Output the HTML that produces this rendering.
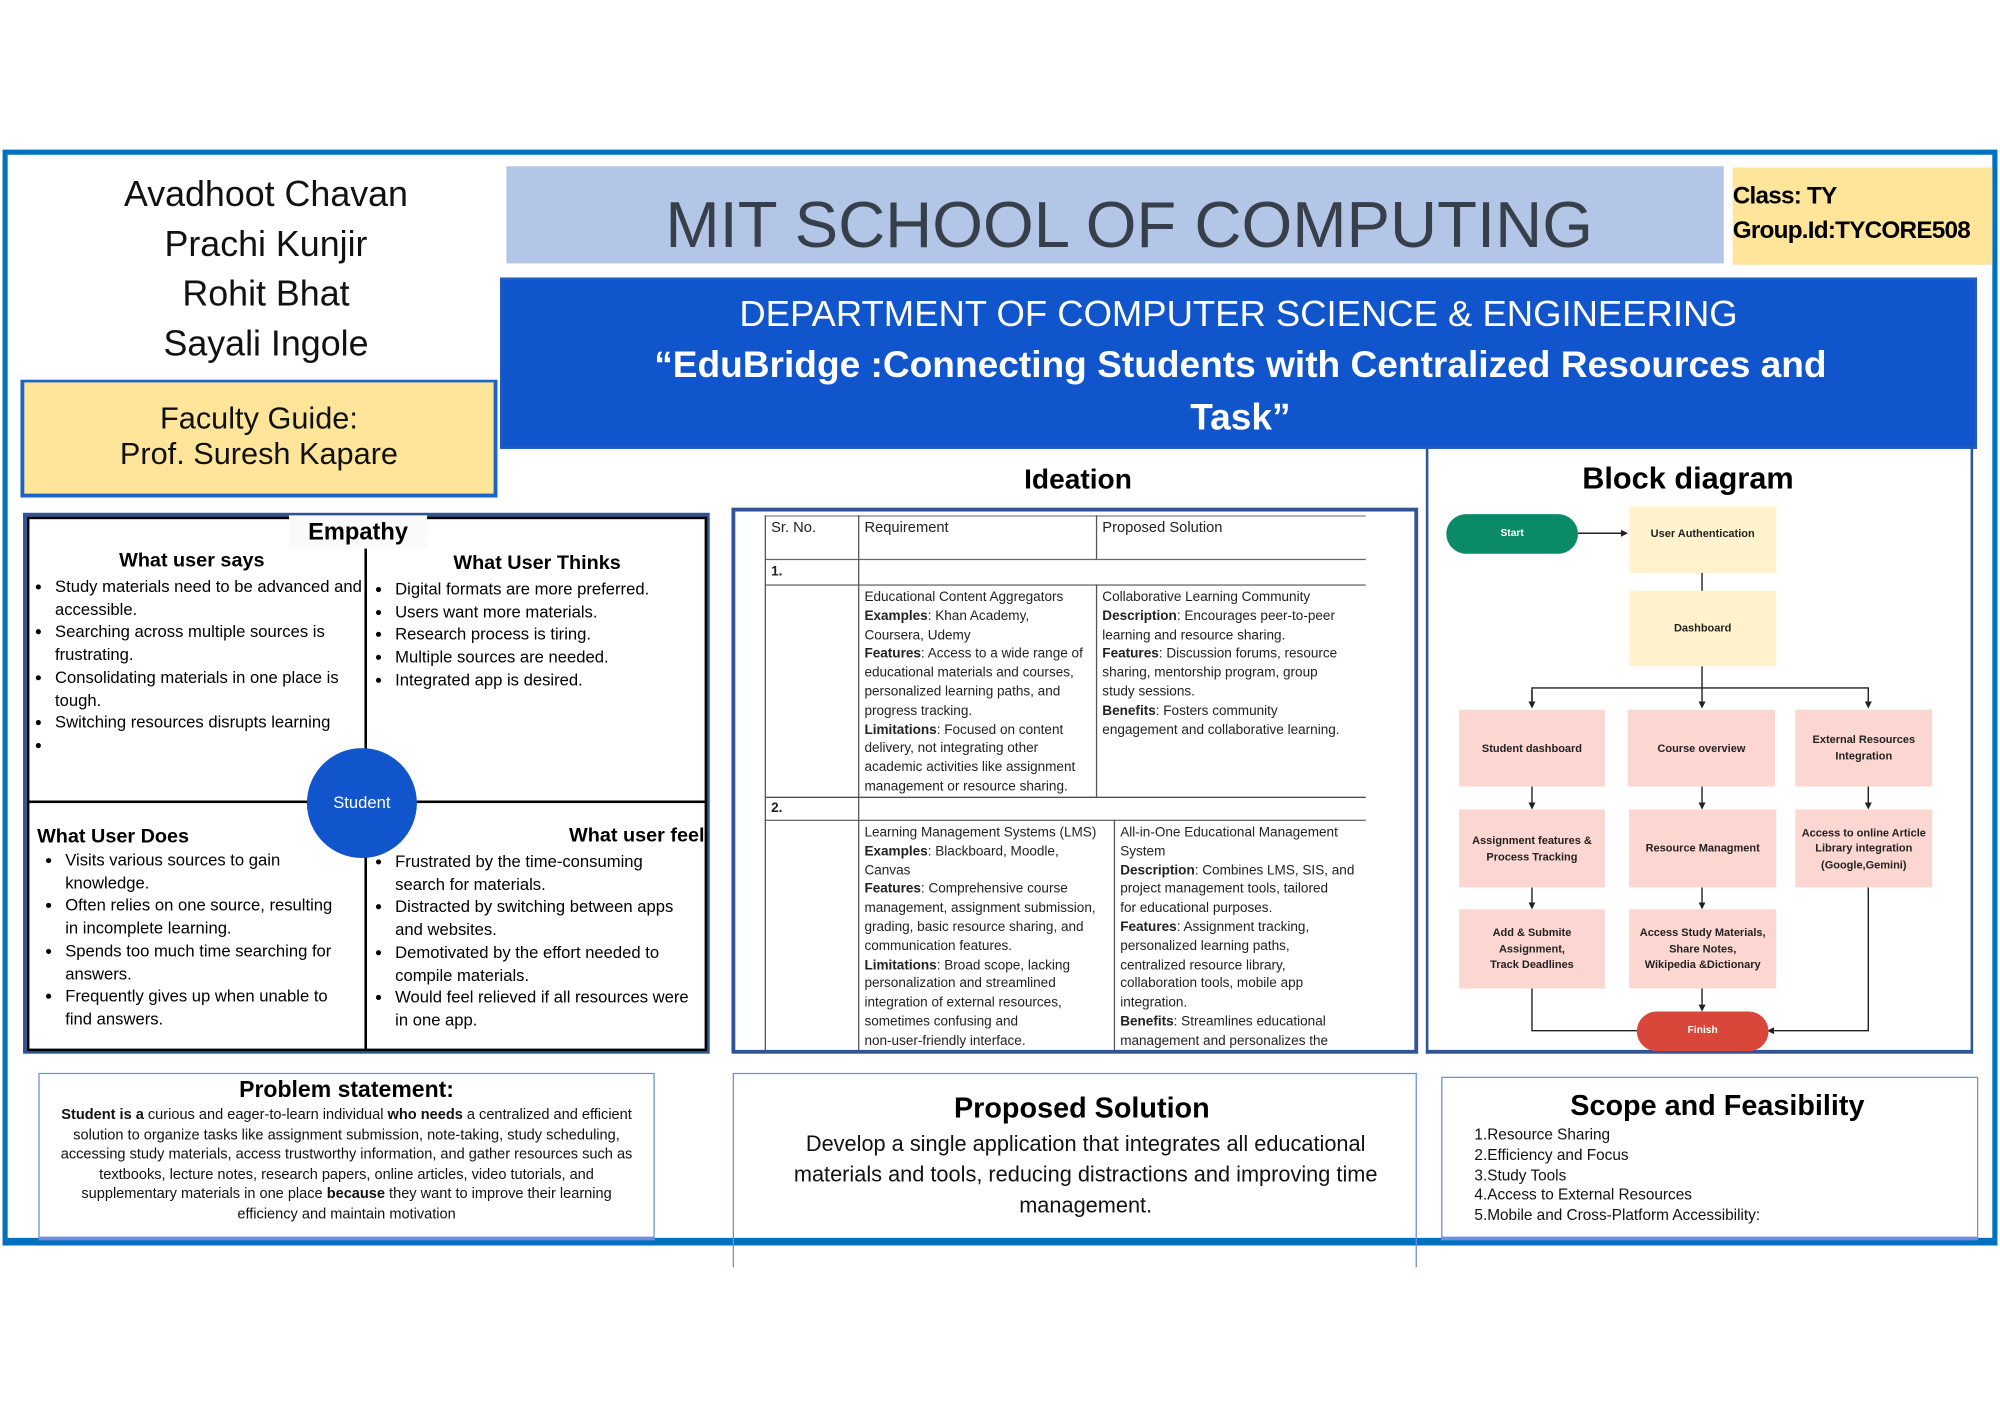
<!DOCTYPE html>
<html><head><meta charset="utf-8">
<style>
html,body{margin:0;padding:0;background:#fff;width:2000px;height:1414px;overflow:hidden}
#s{position:absolute;left:0;top:0;width:1564px;height:1106px;transform:scale(1.27877);transform-origin:0 0;font-family:"Liberation Sans",sans-serif;color:#000}
.a{position:absolute;box-sizing:border-box}
.c{text-align:center}
.b{font-weight:bold}
ul{margin:0;padding:0 0 0 21px}
li{margin:0}
.emp{font-size:13px;line-height:17.7px}
.tb{font-size:10.6px;line-height:14.8px;color:#222}
.bx{position:absolute;box-sizing:border-box;display:flex;align-items:center;justify-content:center;text-align:center;font-size:8.6px;font-weight:bold;line-height:12.6px;color:#222}
.pk{background:#fcd6d1}
.yl{background:#fff2cc}
</style></head><body><div id="s">

<div class="a" style="left:2px;top:117px;width:1560px;height:857px;border:4px solid #0070c0;border-bottom-width:6px"></div>

<div class="a c" style="left:5px;top:132px;width:406px;font-size:28px;line-height:39px;color:#111">Avadhoot Chavan<br>Prachi Kunjir<br>Rohit Bhat<br>Sayali Ingole</div>

<div class="a c" style="left:16px;top:297px;width:373px;height:92px;background:#fee599;border:3px solid #1d64c8;border-top-width:2px;padding-top:15px;font-size:24px;line-height:28px;color:#111">Faculty Guide:<br>Prof. Suresh Kapare</div>

<div class="a" style="left:396px;top:130px;width:952px;height:76px;background:#b4c6e7"></div>
<div class="a" style="left:396px;top:141px;width:974px;font-size:51px;line-height:70px;color:#363f4a;text-align:center">MIT SCHOOL OF COMPUTING</div>

<div class="a b" style="left:1355px;top:131px;width:203px;height:76px;background:#fee599;padding:9px 0 0 0;font-size:19px;line-height:27px;white-space:nowrap;overflow:hidden;letter-spacing:-0.6px">Class: TY<br>Group.Id:TYCORE508</div>

<div class="a" style="left:391px;top:217px;width:1155px;height:134px;background:#1155cc;border:2px solid #1f5bc0"></div>
<div class="a c" style="left:391px;top:227px;width:1155px;color:#fff;font-size:28.5px;line-height:38px">DEPARTMENT OF COMPUTER SCIENCE &amp; ENGINEERING</div>
<div class="a c b" style="left:470px;top:266px;width:1000px;color:#fff;font-size:29px;line-height:41px">“EduBridge :Connecting Students with Centralized Resources and Task”</div>

<div class="a c b" style="left:743px;top:362px;width:200px;font-size:22px">Ideation</div>
<div class="a c b" style="left:1180px;top:361px;width:280px;font-size:24px">Block diagram</div>

<div class="a" style="left:1115px;top:350px;width:428px;height:474px;border:2px solid #2f5597;border-top:none;border-bottom-width:3px"></div>

<div class="a" style="left:18px;top:401px;width:537px;height:423px;border:3px solid #2f5597"></div>
<div class="a" style="left:21px;top:404px;width:532px;height:418px;border:2px solid #000"></div>
<div class="a" style="left:285px;top:428px;width:2px;height:393px;background:#000"></div>
<div class="a" style="left:22px;top:626px;width:531px;height:2px;background:#000"></div>
<div class="a c b" style="left:226px;top:403px;width:108px;height:26px;background:#fafafa;font-size:18.5px;line-height:26px">Empathy</div>
<div class="a" style="left:240px;top:585px;width:86px;height:86px;border-radius:50%;background:#1155cc;color:#fff;font-size:13px;line-height:86px;text-align:center">Student</div>

<div class="a c b" style="left:40px;top:430px;width:220px;font-size:15.5px">What user says</div>
<div class="a emp" style="left:22px;top:450px;width:262px"><ul>
<li>Study materials need to be advanced and accessible.</li>
<li>Searching across multiple sources is frustrating.</li>
<li>Consolidating materials in one place is tough.</li>
<li>Switching resources disrupts learning</li>
<li>&nbsp;</li></ul></div>

<div class="a c b" style="left:300px;top:432px;width:240px;font-size:15.5px">What User Thinks</div>
<div class="a emp" style="left:288px;top:452px;width:262px"><ul>
<li>Digital formats are more preferred.</li>
<li>Users want more materials.</li>
<li>Research process is tiring.</li>
<li>Multiple sources are needed.</li>
<li>Integrated app is desired.</li></ul></div>

<div class="a b" style="left:29px;top:646px;font-size:15.5px">What User Does</div>
<div class="a emp" style="left:30px;top:664px;width:240px"><ul>
<li>Visits various sources to gain knowledge.</li>
<li>Often relies on one source, resulting in incomplete learning.</li>
<li>Spends too much time searching for answers.</li>
<li>Frequently gives up when unable to find answers.</li></ul></div>

<div class="a b" style="left:445px;top:645px;font-size:15.5px;white-space:nowrap;width:108px;overflow:hidden">What user feels</div>
<div class="a emp" style="left:288px;top:665px;width:256px"><ul>
<li>Frustrated by the time-consuming search for materials.</li>
<li>Distracted by switching between apps and websites.</li>
<li>Demotivated by the effort needed to compile materials.</li>
<li>Would feel relieved if all resources were in one app.</li></ul></div>

<div class="a" style="left:572px;top:397px;width:537px;height:427px;border:3px solid #2f5597"></div>
<div class="a" style="left:598px;top:403px;width:470px;height:1px;background:#888"></div>
<div class="a" style="left:598px;top:437px;width:470px;height:1px;background:#666"></div>
<div class="a" style="left:598px;top:457px;width:470px;height:1px;background:#666"></div>
<div class="a" style="left:598px;top:623px;width:470px;height:1px;background:#444"></div>
<div class="a" style="left:598px;top:641px;width:470px;height:1px;background:#666"></div>
<div class="a" style="left:598px;top:403px;width:1px;height:419px;background:#555"></div>
<div class="a" style="left:671px;top:403px;width:1px;height:419px;background:#555"></div>
<div class="a" style="left:857px;top:403px;width:1px;height:34px;background:#555"></div>
<div class="a" style="left:857px;top:457px;width:1px;height:166px;background:#555"></div>
<div class="a" style="left:871px;top:641px;width:1px;height:181px;background:#555"></div>

<div class="a tb" style="left:603px;top:406px;font-size:11.5px">Sr. No.</div>
<div class="a tb" style="left:676px;top:406px;font-size:11.5px">Requirement</div>
<div class="a tb" style="left:862px;top:406px;font-size:11.5px">Proposed Solution</div>
<div class="a tb b" style="left:603px;top:440px">1.</div>
<div class="a tb b" style="left:603px;top:625px">2.</div>

<div class="a tb" style="left:676px;top:460px;width:181px;overflow:hidden;white-space:nowrap">Educational Content Aggregators<br><b>Examples</b>: Khan Academy,<br>Coursera, Udemy<br><b>Features</b>: Access to a wide range of<br>educational materials and courses,<br>personalized learning paths, and<br>progress tracking.<br><b>Limitations</b>: Focused on content<br>delivery, not integrating other<br>academic activities like assignment<br>management or resource sharing.</div>
<div class="a tb" style="left:862px;top:460px;width:205px;overflow:hidden;white-space:nowrap">Collaborative Learning Community<br><b>Description</b>: Encourages peer-to-peer<br>learning and resource sharing.<br><b>Features</b>: Discussion forums, resource<br>sharing, mentorship program, group<br>study sessions.<br><b>Benefits</b>: Fosters community<br>engagement and collaborative learning.</div>

<div class="a tb" style="left:676px;top:644px;width:195px;overflow:hidden;white-space:nowrap">Learning Management Systems (LMS)<br><b>Examples</b>: Blackboard, Moodle,<br>Canvas<br><b>Features</b>: Comprehensive course<br>management, assignment submission,<br>grading, basic resource sharing, and<br>communication features.<br><b>Limitations</b>: Broad scope, lacking<br>personalization and streamlined<br>integration of external resources,<br>sometimes confusing and<br>non-user-friendly interface.</div>
<div class="a tb" style="left:876px;top:644px;width:191px;height:178px;overflow:hidden;white-space:nowrap">All-in-One Educational Management<br>System<br><b>Description</b>: Combines LMS, SIS, and<br>project management tools, tailored<br>for educational purposes.<br><b>Features</b>: Assignment tracking,<br>personalized learning paths,<br>centralized resource library,<br>collaboration tools, mobile app<br>integration.<br><b>Benefits</b>: Streamlines educational<br>management and personalizes the</div>

<svg class="a" style="left:0;top:0" width="1564" height="1106">
<defs><marker id="ar" markerWidth="5" markerHeight="5" refX="4" refY="2.5" orient="auto"><path d="M0,0 L5,2.5 L0,5 z" fill="#222"/></marker></defs>
<g stroke="#222" stroke-width="1.1" fill="none">
<line x1="1234" y1="417" x2="1272" y2="417" marker-end="url(#ar)"/>
<line x1="1331" y1="447" x2="1331" y2="468" marker-end="url(#ar)"/>
<line x1="1331" y1="521" x2="1331" y2="553" marker-end="url(#ar)"/>
<polyline points="1198,553 1198,538 1461,538 1461,553" marker-end="url(#ar)"/>
<line x1="1198" y1="540" x2="1198" y2="553" marker-end="url(#ar)"/>
<line x1="1198" y1="615" x2="1198" y2="632" marker-end="url(#ar)"/>
<line x1="1331" y1="615" x2="1331" y2="632" marker-end="url(#ar)"/>
<line x1="1461" y1="615" x2="1461" y2="632" marker-end="url(#ar)"/>
<line x1="1198" y1="694" x2="1198" y2="710" marker-end="url(#ar)"/>
<line x1="1331" y1="694" x2="1331" y2="710" marker-end="url(#ar)"/>
<line x1="1331" y1="773" x2="1331" y2="790" marker-end="url(#ar)"/>
<polyline points="1198,773 1198,806 1291,806" marker-end="url(#ar)"/>
<polyline points="1461,694 1461,806 1383,806" marker-end="url(#ar)"/>
</g></svg>
<div class="bx" style="left:1131px;top:402px;width:103px;height:31px;border-radius:16px;background:#0a8a66;color:#fff;font-size:8px">Start</div>
<div class="bx yl" style="left:1274px;top:396px;width:115px;height:52px;align-items:flex-start;padding-top:15px">User Authentication</div>
<div class="bx yl" style="left:1274px;top:462px;width:115px;height:59px">Dashboard</div>
<div class="bx pk" style="left:1141px;top:555px;width:114px;height:60px">Student dashboard</div>
<div class="bx pk" style="left:1273px;top:555px;width:115px;height:60px">Course overview</div>
<div class="bx pk" style="left:1404px;top:555px;width:107px;height:60px">External Resources<br>Integration</div>
<div class="bx pk" style="left:1141px;top:633px;width:114px;height:61px">Assignment features &amp;<br>Process Tracking</div>
<div class="bx pk" style="left:1274px;top:633px;width:115px;height:61px">Resource Managment</div>
<div class="bx pk" style="left:1404px;top:633px;width:107px;height:61px;white-space:nowrap;overflow:hidden">Access to online Article<br>Library integration<br>(Google,Gemini)</div>
<div class="bx pk" style="left:1141px;top:711px;width:114px;height:62px">Add &amp; Submite<br>Assignment,<br>Track Deadlines</div>
<div class="bx pk" style="left:1274px;top:711px;width:115px;height:62px">Access Study Materials,<br>Share Notes,<br>Wikipedia &amp;Dictionary</div>
<div class="bx" style="left:1280px;top:791px;width:103px;height:31px;border-radius:16px;background:#d9473a;color:#fff;font-size:8px">Finish</div>

<div class="a" style="left:30px;top:839px;width:482px;height:131px;border:1px solid #6f8fd6;border-bottom:3px solid #6f8fd6"></div>
<div class="a c b" style="left:30px;top:840px;width:482px;font-size:18px;line-height:24px">Problem statement:</div>
<div class="a c" style="left:40px;top:865px;width:462px;font-size:11.4px;line-height:15.5px;color:#111"><b>Student is a</b> curious and eager-to-learn individual <b>who needs</b> a centralized and efficient solution to organize tasks like assignment submission, note-taking, study scheduling, accessing study materials, access trustworthy information, and gather resources such as textbooks, lecture notes, research papers, online articles, video tutorials, and supplementary materials in one place <b>because</b> they want to improve their learning efficiency and maintain motivation</div>

<div class="a" style="left:573px;top:839px;width:535px;height:1px;background:#6f8fd6"></div>
<div class="a" style="left:573px;top:839px;width:1px;height:152px;background:#6f8fd6"></div>
<div class="a" style="left:1107px;top:839px;width:1px;height:152px;background:#6f8fd6"></div>
<div class="a c b" style="left:573px;top:852px;width:546px;font-size:22.5px;line-height:30px">Proposed Solution</div>
<div class="a c" style="left:594px;top:883px;width:510px;font-size:17px;line-height:24px;color:#111">Develop a single application that integrates all educational materials and tools, reducing distractions and improving time management.</div>

<div class="a" style="left:1127px;top:842px;width:420px;height:128px;border:1px solid #6f8fd6;border-bottom:3px solid #6f8fd6"></div>
<div class="a c b" style="left:1127px;top:850px;width:432px;font-size:22.5px;line-height:30px">Scope and Feasibility</div>
<div class="a" style="left:1153px;top:880px;font-size:12px;line-height:15.8px;color:#111">1.Resource Sharing<br>2.Efficiency and Focus<br>3.Study Tools<br>4.Access to External Resources<br>5.Mobile and Cross-Platform Accessibility:</div>

</div></body></html>
